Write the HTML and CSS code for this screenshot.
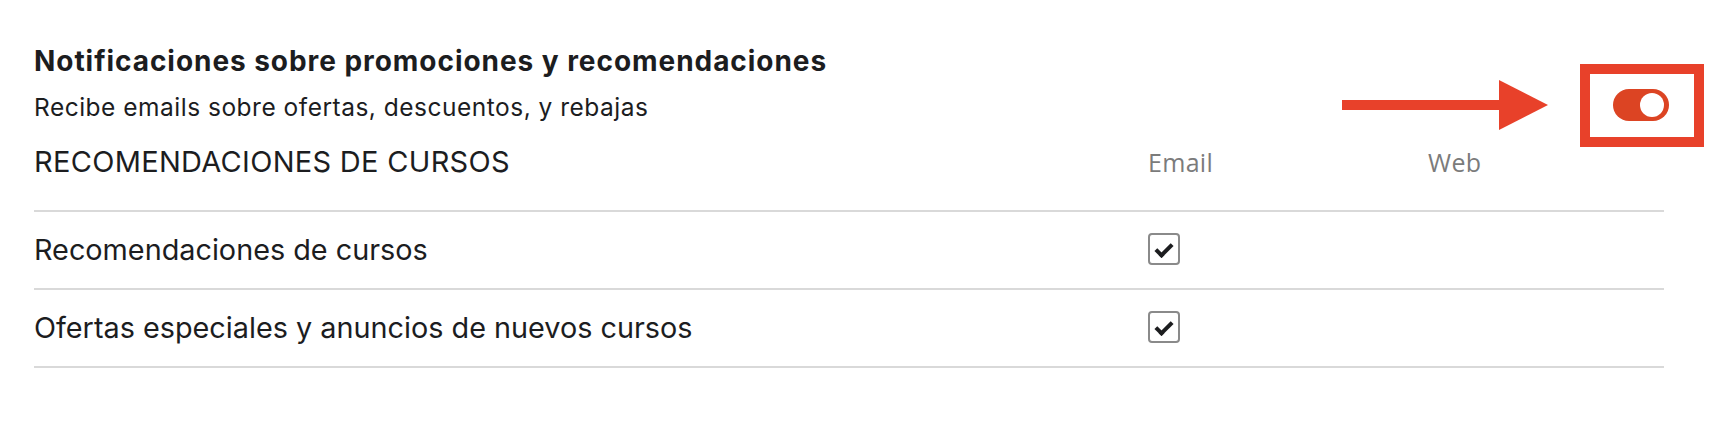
FILE: index.html
```html
<!DOCTYPE html>
<html lang="es">
<head>
  <meta charset="UTF-8">
  <meta name="viewport" content="width=device-width, initial-scale=1.0">
  <title>Notificaciones</title>
  <link rel="stylesheet" href="styles.css">
</head>
<body>
  <div class="settings">

    <div class="group-head">
      <div class="group-text">
        <h2>Notificaciones sobre promociones y recomendaciones</h2>
        <p>Recibe emails sobre ofertas, descuentos, y rebajas</p>
      </div>
      <div class="toggle-wrap">
        <div class="arrow">
          <span class="arrow-line"></span>
          <span class="arrow-head"></span>
        </div>
        <div class="highlight"></div>
        <label class="toggle">
          <input type="checkbox" checked>
          <span class="knob"></span>
        </label>
      </div>
    </div>

    <div class="pref-table">
      <div class="pref-row pref-head">
        <div class="pref-label section">RECOMENDACIONES DE CURSOS</div>
        <div class="pref-col">Email</div>
        <div class="pref-col">Web</div>
      </div>

      <div class="pref-row">
        <div class="pref-label">Recomendaciones de cursos</div>
        <div class="pref-cell"><span class="check"></span></div>
        <div class="pref-cell"></div>
      </div>

      <div class="pref-row">
        <div class="pref-label">Ofertas especiales y anuncios de nuevos cursos</div>
        <div class="pref-cell"><span class="check"></span></div>
        <div class="pref-cell"></div>
      </div>
    </div>

  </div>
</body>
</html>
```

FILE: styles.css
```css
body {
  margin: 0;
  background: #fff;
  color: #1c1d1f;
  font-family: Inter, "Liberation Sans", sans-serif;
}
.settings {
  padding: 44px 0 0 34px;
  width: 1630px;
}
.group-head {
  display: flex;
  justify-content: space-between;
}
.group-head h2 {
  margin: 0;
  font-size: 28px;
  line-height: 34px;
  font-weight: 700;
  letter-spacing: 0.95px;
}
.group-head p {
  margin: 14px 0 0;
  font-size: 24.5px;
  line-height: 30px;
  letter-spacing: 0.5px;
}

/* toggle with the callout drawn over it */
.toggle-wrap {
  position: relative;
  margin: 45px -5px 0 0;
  width: 56px;
  height: 32px;
}
.toggle input { display: none; }
.toggle {
  display: block;
  width: 56px;
  height: 32px;
  border-radius: 16px;
  background: #dc4423;
}
.knob {
  position: absolute;
  top: 4px;
  right: 5px;
  width: 24px;
  height: 24px;
  border-radius: 50%;
  background: #fff;
}
.highlight {
  position: absolute;
  left: -33px;
  top: -25px;
  width: 104px;
  height: 63px;
  border: 10px solid #e8412a;
}
.arrow {
  position: absolute;
  left: -271px;
  top: -9px;
  display: flex;
  align-items: center;
  height: 50px;
}
.arrow-line {
  width: 157px;
  height: 10px;
  background: #e8412a;
}
.arrow-head {
  width: 0;
  height: 0;
  border-top: 25px solid transparent;
  border-bottom: 25px solid transparent;
  border-left: 49px solid #e8412a;
}

.pref-table { margin-top: 22px; }
.pref-row {
  display: grid;
  grid-template-columns: 1114px 280px 1fr;
  align-items: center;
  height: 76px;
  border-bottom: 2px solid #d9d9d9;
}
.pref-head {
  height: auto;
  align-items: baseline;
  padding-bottom: 30px;
}
.pref-label {
  font-size: 28.8px;
  line-height: 36px;
}
.section {
  font-size: 29px;
  letter-spacing: 0.3px;
}
.pref-col {
  font-family: "Open Sans", sans-serif;
  font-size: 25px;
  line-height: 36px;
  letter-spacing: 0.3px;
  color: #7b7b7b;
}
.pref-cell {
  display: flex;
  align-items: center;
  margin-top: -3px;
}
.check {
  position: relative;
  box-sizing: border-box;
  width: 32px;
  height: 32px;
  border: 2px solid #8a8a8a;
  border-radius: 4px;
}
.check::after {
  content: "";
  position: absolute;
  left: 9px;
  top: 5px;
  width: 6px;
  height: 13px;
  border: solid #1c1d1f;
  border-width: 0 4.5px 4.5px 0;
  transform: rotate(45deg);
}
```
